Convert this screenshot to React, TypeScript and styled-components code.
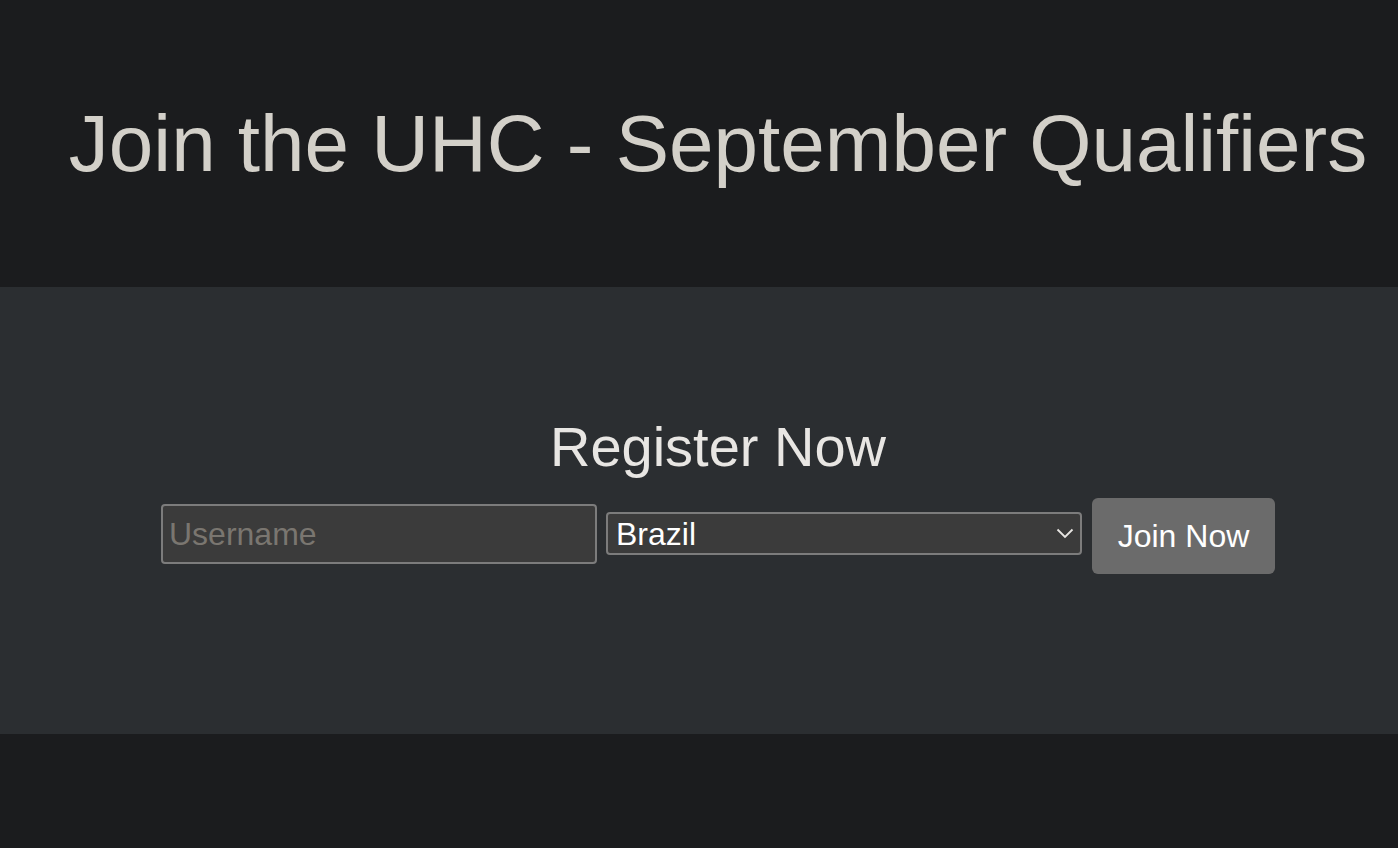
import React from "react";
import styled, { createGlobalStyle } from "styled-components";

const Global = createGlobalStyle`
  html, body { margin: 0; padding: 0; background: #1b1c1e; }
  body { font-family: "Liberation Sans", Arial, sans-serif; }
  * { box-sizing: border-box; }
`;

const Page = styled.div`
  min-height: 848px;
  background: #1b1c1e;
  display: flex;
  flex-direction: column;
`;

const Header = styled.header`
  height: 287px;
  padding: 98px 0 0 38px;
  text-align: center;
`;

const Title = styled.h1`
  margin: 0;
  font-size: 80px;
  font-weight: 400;
  line-height: normal;
  color: #d3d0c9;
  white-space: nowrap;
`;

const Section = styled.section`
  height: 447px;
  background: #2b2e31;
  padding: 128px 0 0 38px;
  display: flex;
  flex-direction: column;
  align-items: center;
`;

const Heading = styled.h2`
  margin: 0 0 19px;
  font-size: 56px;
  font-weight: 400;
  line-height: 64px;
  color: #e8e6e3;
`;

const Form = styled.form`
  display: flex;
  align-items: center;
  gap: 9px;
`;

const TextInput = styled.input`
  width: 436px;
  height: 60px;
  margin-top: -4px;
  padding: 0 6px;
  background: #3b3b3b;
  border: 2px solid #7c7c7c;
  border-radius: 4px;
  color: #e8e6e3;
  font-family: "Liberation Sans", Arial, sans-serif;
  font-size: 32px;
  outline: none;
  &::placeholder { color: #7a7670; }
`;

const SelectWrap = styled.div`
  position: relative;
  width: 476px;
  height: 43px;
  margin-top: -5px;
`;

const Select = styled.select`
  appearance: none;
  width: 100%;
  height: 100%;
  padding: 0 36px 0 8px;
  background: #3b3b3b;
  border: 2px solid #7c7c7c;
  border-radius: 4px;
  color: #ffffff;
  font-family: "Liberation Sans", Arial, sans-serif;
  font-size: 32px;
  outline: none;
`;

const Chevron = styled.svg`
  position: absolute;
  right: 8px;
  top: 16px;
  width: 18px;
  height: 11px;
  pointer-events: none;
`;

const Button = styled.button`
  width: 183px;
  height: 76px;
  margin-left: 1px;
  padding: 0;
  background: #6b6b6b;
  border: none;
  border-radius: 6px;
  color: #ffffff;
  font-family: "Liberation Sans", Arial, sans-serif;
  font-size: 32px;
  white-space: nowrap;
  cursor: pointer;
`;

export default function App() {
  return (
    <Page>
      <Global />
      <Header>
        <Title>Join the UHC - September Qualifiers</Title>
      </Header>
      <Section>
        <Heading>Register Now</Heading>
        <Form onSubmit={(e) => e.preventDefault()}>
          <TextInput placeholder="Username" />
          <SelectWrap>
            <Select defaultValue="Brazil">
              <option>Brazil</option>
              <option>Argentina</option>
              <option>United States</option>
            </Select>
            <Chevron viewBox="0 0 18 11" fill="none">
              <path d="M1.5 1.5 L9 9 L16.5 1.5" stroke="#e8e6e3" strokeWidth="1.8" />
            </Chevron>
          </SelectWrap>
          <Button type="submit">Join Now</Button>
        </Form>
      </Section>
    </Page>
  );
}
